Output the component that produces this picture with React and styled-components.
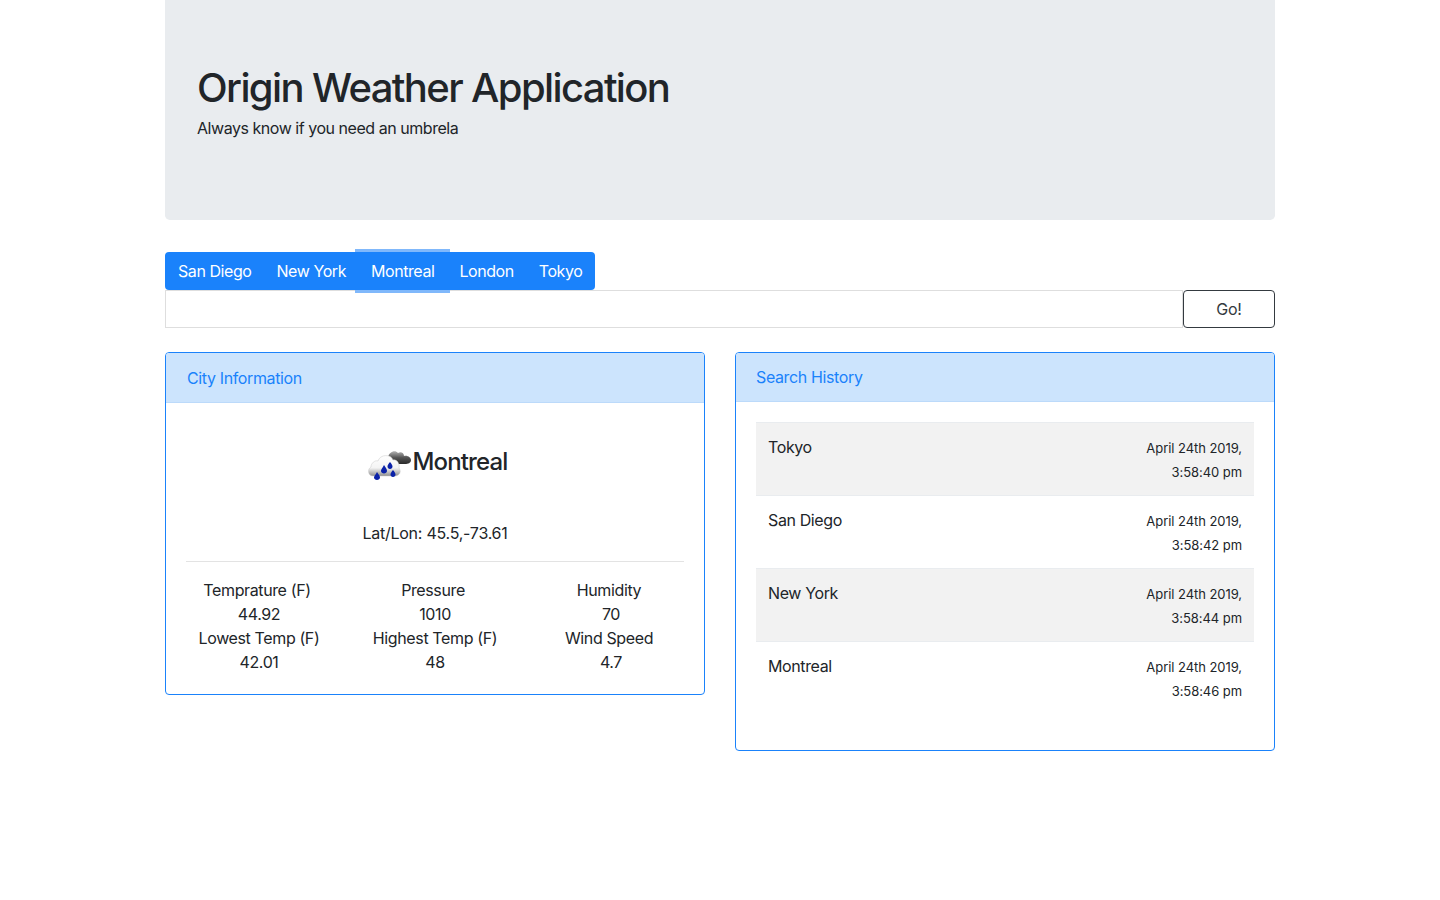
import React from "react";
import styled, { createGlobalStyle } from "styled-components";

const Global = createGlobalStyle`
  * { box-sizing: border-box; }
  html, body { margin: 0; background: #fff; }
  body { font-family: Inter, "Liberation Sans", sans-serif; font-size: 16px; line-height: 24px; color: #212529; letter-spacing: -0.38px; }
`;
const Container = styled.div`
  width: 1110px;
  margin: 0 auto;
`;
const Jumbotron = styled.header`
  height: 220px;
  padding: 64px 32px;
  background: #e9ecef;
  border-radius: 0 0 4.8px 4.8px;
  margin-bottom: 32px;
`;
const Title = styled.h1`
  margin: 0 0 4px;
  font-size: 40px;
  line-height: 47px;
  padding-bottom: 1px;
  font-weight: 500;
  letter-spacing: -1.62px;
`;
const Lead = styled.p`
  margin: 0;
  letter-spacing: -0.46px;
`;
const Nav = styled.nav`
  display: flex;
  width: 430px;
  height: 38px;
  padding: 0 0.5px;
  background: #1a82fb;
  border-radius: 4px;
`;
const NavItem = styled.a`
  position: relative;
  color: #fff;
  line-height: 38px;
  padding: 0 12.5px;
  white-space: nowrap;
  letter-spacing: -0.43px;
  ${(p) => p.$active && `
    &::before {
      content: "";
      position: absolute;
      inset: -3px -3.5px;
      border-top: 3px solid #80b8fb;
      border-bottom: 3px solid #80b8fb;
    }
  `}
`;
const SearchRow = styled.form`
  display: flex;
  height: 38px;
  margin-bottom: 24px;
`;
const Input = styled.input`
  flex: 1;
  min-width: 0;
  border: 1px solid #dedede;
  background: #fff;
  outline: none;
  padding: 0;
`;
const GoButton = styled.button`
  width: 92px;
  border: 1px solid #343a40;
  border-radius: 4px;
  background: #fff;
  color: #343a40;
  font: inherit;
  letter-spacing: -0.2px;
  padding: 0;
`;
const Columns = styled.div`
  display: grid;
  grid-template-columns: 540px 540px;
  gap: 30px;
  align-items: start;
`;
const Card = styled.section`
  border: 1px solid #1a82fb;
  border-radius: 4px;
  overflow: hidden;
`;
const CardHeader = styled.h2`
  margin: 0;
  height: ${(p) => p.$h}px;
  padding: ${(p) => p.$top}px ${(p) => p.$x}px 0;
  font-size: 16px;
  font-weight: 400;
  line-height: 24px;
  letter-spacing: -0.37px;
  color: #1a82fb;
  background: #cce4fd;
  border-bottom: 1px solid #bcdafa;
`;
const CityBody = styled.div`
  padding: 21px 20px 20px;
`;
const CityName = styled.div`
  display: flex;
  align-items: center;
  justify-content: center;
  height: 76px;
  padding-left: 4px;
  font-size: 24px;
  line-height: 28px;
  font-weight: 500;
  letter-spacing: -0.85px;
`;
const LatLon = styled.div`
  text-align: center;
  margin-top: 21px;
  height: 41px;
  border-bottom: 1px solid #e3e3e3;
  letter-spacing: -0.25px;
`;
const Stats = styled.div`
  display: grid;
  grid-template-columns: repeat(3, 176px);
  margin: 16px -15px 0;
`;
const Stat = styled.div`
  text-align: center;
  padding-right: ${(p) => (p.$trail ? 4 : 0)}px;
`;
const HistoryBody = styled.div`
  padding: 20px 20px 36px;
`;
const HistoryRow = styled.div`
  display: flex;
  justify-content: space-between;
  height: 73px;
  padding: 12px 12px 0;
  background: ${(p) => (p.$odd ? "#f2f2f2" : "#fff")};
  border-top: 1px solid #e9ecef;
`;
const When = styled.div`
  text-align: right;
  font-size: 13px;
  line-height: 24px;
  margin-top: 1px;
  letter-spacing: -0.06px;
`;

const WeatherIcon = () => (
  <svg width="46" height="46" viewBox="0 0 46 46" aria-hidden="true">
    <defs>
      <linearGradient id="dark" x1="0" y1="0" x2="0" y2="1">
        <stop offset="0" stopColor="#b5b5b5" />
        <stop offset="0.5" stopColor="#555" />
        <stop offset="1" stopColor="#2a2a2a" />
      </linearGradient>
      <linearGradient id="light" x1="0" y1="0" x2="0" y2="1">
        <stop offset="0" stopColor="#fff" />
        <stop offset="0.6" stopColor="#f4f4f4" />
        <stop offset="1" stopColor="#8f8f8f" />
      </linearGradient>
    </defs>
    <path d="M25 25C20 25 19 19 22 18C23 13 29 10 32 14C35 12 38 14 38 17C42 16 45 19 45 21C45 24 42 25 39 25Z" fill="url(#dark)" />
    <path d="M7 37C2 37 1 30 5 28C5 24 9 21 12 22C14 15 25 15 27 21C31 20 34 25 33 29C36 33 33 37 29 37Z" fill="url(#light)" stroke="#c9c9c9" strokeWidth=".5" />
    <path d="M11 33C13 36 14 37 14 38.500C14 40 12.500 41 11 41C9.500 41 8 40 8 38.500C8 37 9.500 36 11 33ZM18 26C20 29 21 30 21 32C21 33.500 19.500 34.500 18 34.500C16.500 34.500 15 33.500 15 32C15 30 16.500 29 18 26ZM24 23C25.500 25 26.500 26 26.500 27.500C26.500 29 25.500 30 24 30C22.500 30 21.500 29 21.500 27.500C21.500 26 22.500 25 24 23ZM27 31C28.500 33 29.500 34 29.500 35.500C29.500 37 28.500 38 27 38C25.500 38 24.500 37 24.500 35.500C24.500 34 25.500 33 27 31Z" fill="#0b22a8" />
  </svg>
);

const cities = ["San Diego", "New York", "Montreal", "London", "Tokyo"];
const stats = [
  ["Temprature (F)", "Pressure", "Humidity"],
  ["44.92", "1010", "70"],
  ["Lowest Temp (F)", "Highest Temp (F)", "Wind Speed"],
  ["42.01", "48", "4.7"],
];
const trailing = ["Temprature (F)", "Pressure", "Humidity", "Wind Speed"];
const history = [
  ["Tokyo", "April 24th 2019,", "3:58:40 pm"],
  ["San Diego", "April 24th 2019,", "3:58:42 pm"],
  ["New York", "April 24th 2019,", "3:58:44 pm"],
  ["Montreal", "April 24th 2019,", "3:58:46 pm"],
];

export default function App() {
  return (
    <Container>
      <Global />
      <Jumbotron>
        <Title>Origin Weather Application</Title>
        <Lead>Always know if you need an umbrela</Lead>
      </Jumbotron>
      <Nav>
        {cities.map((c) => (
          <NavItem key={c} $active={c === "Montreal"}>{c}</NavItem>
        ))}
      </Nav>
      <SearchRow onSubmit={(e) => e.preventDefault()}>
        <Input />
        <GoButton>Go!</GoButton>
      </SearchRow>
      <Columns>
        <Card>
          <CardHeader $h={50} $top={13} $x={21}>City Information</CardHeader>
          <CityBody>
            <CityName><WeatherIcon />Montreal</CityName>
            <LatLon>Lat/Lon: 45.5,-73.61</LatLon>
            <Stats>
              {stats.flat().map((s, i) => <Stat key={i} $trail={trailing.includes(s)}>{s}</Stat>)}
            </Stats>
          </CityBody>
        </Card>
        <Card>
          <CardHeader $h={49} $top={12} $x={20}>Search History</CardHeader>
          <HistoryBody>
            {history.map(([city, date, time], i) => (
              <HistoryRow key={city} $odd={i % 2 === 0}>
                <div>{city}</div>
                <When>{date}<br />{time}</When>
              </HistoryRow>
            ))}
          </HistoryBody>
        </Card>
      </Columns>
    </Container>
  );
}
